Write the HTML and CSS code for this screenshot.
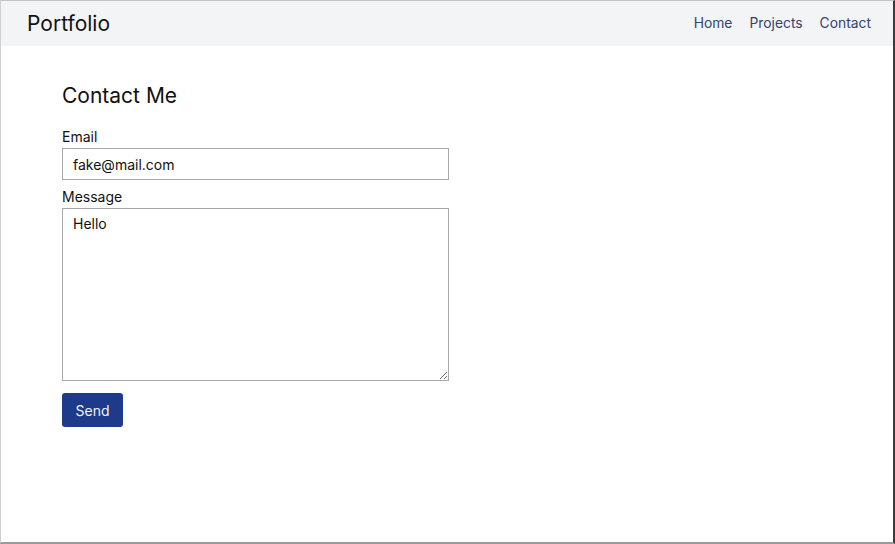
FILE: index.html
```html
<!DOCTYPE html>
<html lang="en">
<head>
<meta charset="utf-8">
<title>Portfolio</title>
<link rel="stylesheet" href="styles.css">
</head>
<body>
<div class="frame">
  <header class="topbar">
    <div class="brand">Portfolio</div>
    <nav class="nav">
      <a href="#">Home</a>
      <a href="#">Projects</a>
      <a href="#">Contact</a>
    </nav>
  </header>
  <main class="content">
    <h1 class="title">Contact Me</h1>
    <form class="form">
      <label class="label" for="email">Email</label>
      <input class="input" id="email" type="email" value="fake@mail.com">
      <label class="label" for="msg">Message</label>
      <textarea class="textarea" id="msg">Hello</textarea>
      <button class="btn" type="button">Send</button>
    </form>
  </main>
</div>
</body>
</html>
```

FILE: styles.css
```css
* { box-sizing: border-box; }
html, body { margin: 0; padding: 0; }
body {
  font-family: Inter, "Noto Sans", sans-serif;
  color: #111;
  background: #fff;
}
.frame {
  width: 895px;
  height: 544px;
  border-top: 1px solid #c4c4c4;
  border-left: 1px solid #d0d0d0;
  border-right: 2px solid #3a3a3a;
  border-bottom: 2px solid #9a9a9a;
  overflow: hidden;
}
.topbar {
  height: 45px;
  background: #f3f4f6;
  display: flex;
  align-items: center;
  justify-content: space-between;
  padding: 0 22px 1px 26px;
}
.brand {
  font-size: 21px;
  color: #111;
}
.nav {
  display: flex;
  gap: 17px;
}
.nav a {
  font-size: 13.85px;
  color: #34446a;
  text-decoration: none;
}
.content {
  padding: 36px 0 0 61px;
}
.title {
  margin: 0 0 17px;
  font-size: 21px;
  font-weight: 400;
  line-height: 28px;
}
.form {
  display: flex;
  flex-direction: column;
  align-items: flex-start;
  width: 387px;
}
.label {
  font-size: 14px;
  line-height: 20px;
  margin-bottom: 1px;
}
.input, .textarea {
  width: 387px;
  font-family: inherit;
  font-size: 14px;
  color: #111;
  border: 1px solid #a8a8a8;
  border-radius: 0;
  padding: 0 10px;
  margin: 0 0 7px;
  background: #fff;
}
.input {
  height: 32px;
}
.textarea {
  height: 173px;
  padding-top: 5px;
  resize: vertical;
  line-height: 20px;
  margin-bottom: 12px;
}
.btn {
  background: #1e3a8a;
  color: #f1f3f8;
  border: 0;
  border-radius: 3px;
  width: 61px;
  height: 34px;
  font-family: inherit;
  font-size: 14px;
  padding: 0;
}
```
